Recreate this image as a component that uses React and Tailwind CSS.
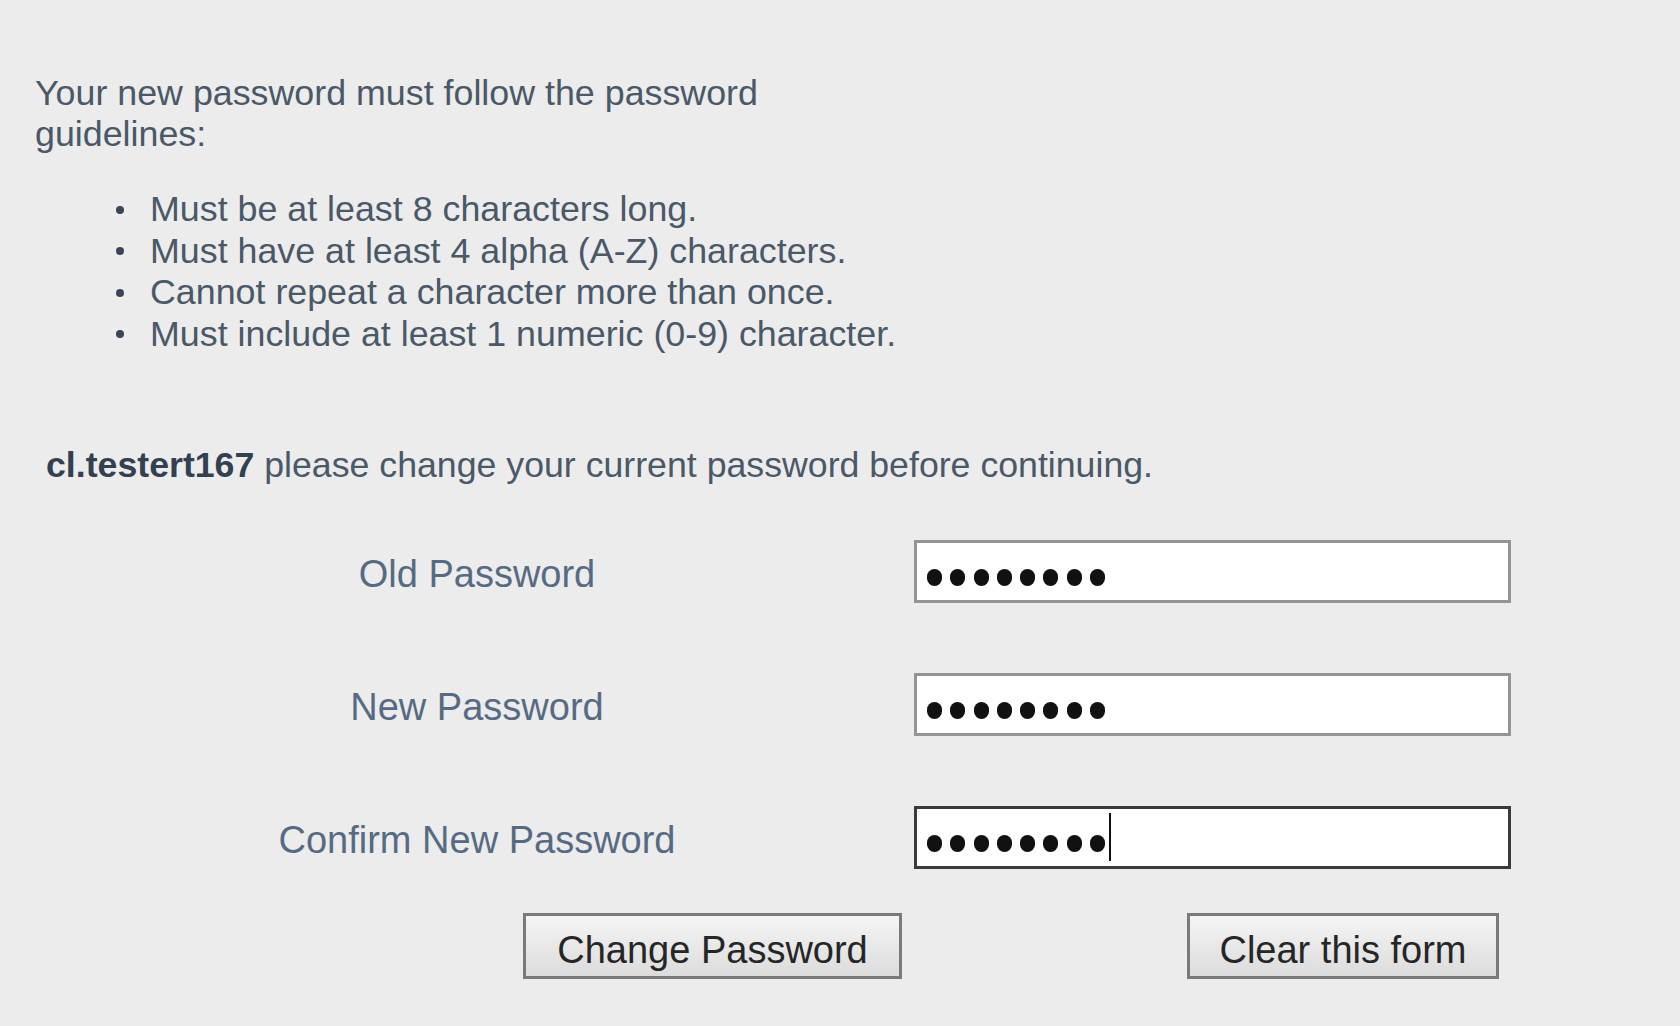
import React from "react";

function Dots({ caret }) {
  return (
    <div className="flex items-center pt-[12px] pl-[10px] h-full">
      <div className="flex items-center gap-[8.3px]">
        {[0, 1, 2, 3, 4, 5, 6, 7].map((i) => (
          <span key={i} className="block w-[15px] h-[17px] rounded-full bg-[#111]" />
        ))}
      </div>
      {caret ? <span className="block w-[2px] h-[48px] bg-[#111] ml-[4px] -translate-y-[7px]" /> : null}
    </div>
  );
}

function Row({ label, focused, caret }) {
  return (
    <div className="flex items-center">
      <div className="w-[862px] pt-[5px] text-center text-[38px] leading-[44px] text-[#566b83]">{label}</div>
      <div
        className={
          "ml-[6px] w-[597px] h-[63px] bg-white border-[3px] " +
          (focused ? "border-[#3a3a3a]" : "border-[#949494]")
        }
      >
        <Dots caret={caret} />
      </div>
    </div>
  );
}

export default function App() {
  const bullets = [
    "Must be at least 8 characters long.",
    "Must have at least 4 alpha (A-Z) characters.",
    "Cannot repeat a character more than once.",
    "Must include at least 1 numeric (0-9) character.",
  ];
  return (
    <div
      className="w-[1680px] h-[1026px] overflow-hidden bg-[#ececec] pt-[73px] pl-[35px]"
      style={{ fontFamily: '"Liberation Sans", Arial, sans-serif' }}
    >
      <p className="w-[790px] text-[35.8px] leading-[41px] text-[#4a5868]">
        Your new password must follow the password guidelines:
      </p>
      <ul className="mt-[34px] pl-[81px]">
        {bullets.map((b) => (
          <li key={b} className="flex items-center text-[35.8px] leading-[41.5px] text-[#4a5868]">
            <span className="block w-[8px] h-[8px] rounded-full bg-[#3a4656] mr-[26px]" />
            <span>{b}</span>
          </li>
        ))}
      </ul>
      <p className="mt-[90px] pl-[11px] text-[35.7px] leading-[41px] text-[#4a5868]">
        <span className="font-bold text-[#33404f]">cl.testert167</span> please change your current password before
        continuing.
      </p>
      <div className="mt-[54px] pl-[11px] flex flex-col gap-[70px]">
        <Row label="Old Password" />
        <Row label="New Password" />
        <Row label="Confirm New Password" focused caret />
      </div>
      <div className="mt-[44px] flex">
        <button className="ml-[488px] w-[379px] h-[66px] border-[3px] border-[#7a7a7a] bg-gradient-to-b from-[#f5f5f5] to-[#dcdcdc] text-[38px] leading-none text-[#262626] pt-[8px]">
          Change Password
        </button>
        <button className="ml-[285px] w-[312px] h-[66px] border-[3px] border-[#7a7a7a] bg-gradient-to-b from-[#f5f5f5] to-[#dcdcdc] text-[38px] leading-none text-[#262626] pt-[8px]">
          Clear this form
        </button>
      </div>
    </div>
  );
}
